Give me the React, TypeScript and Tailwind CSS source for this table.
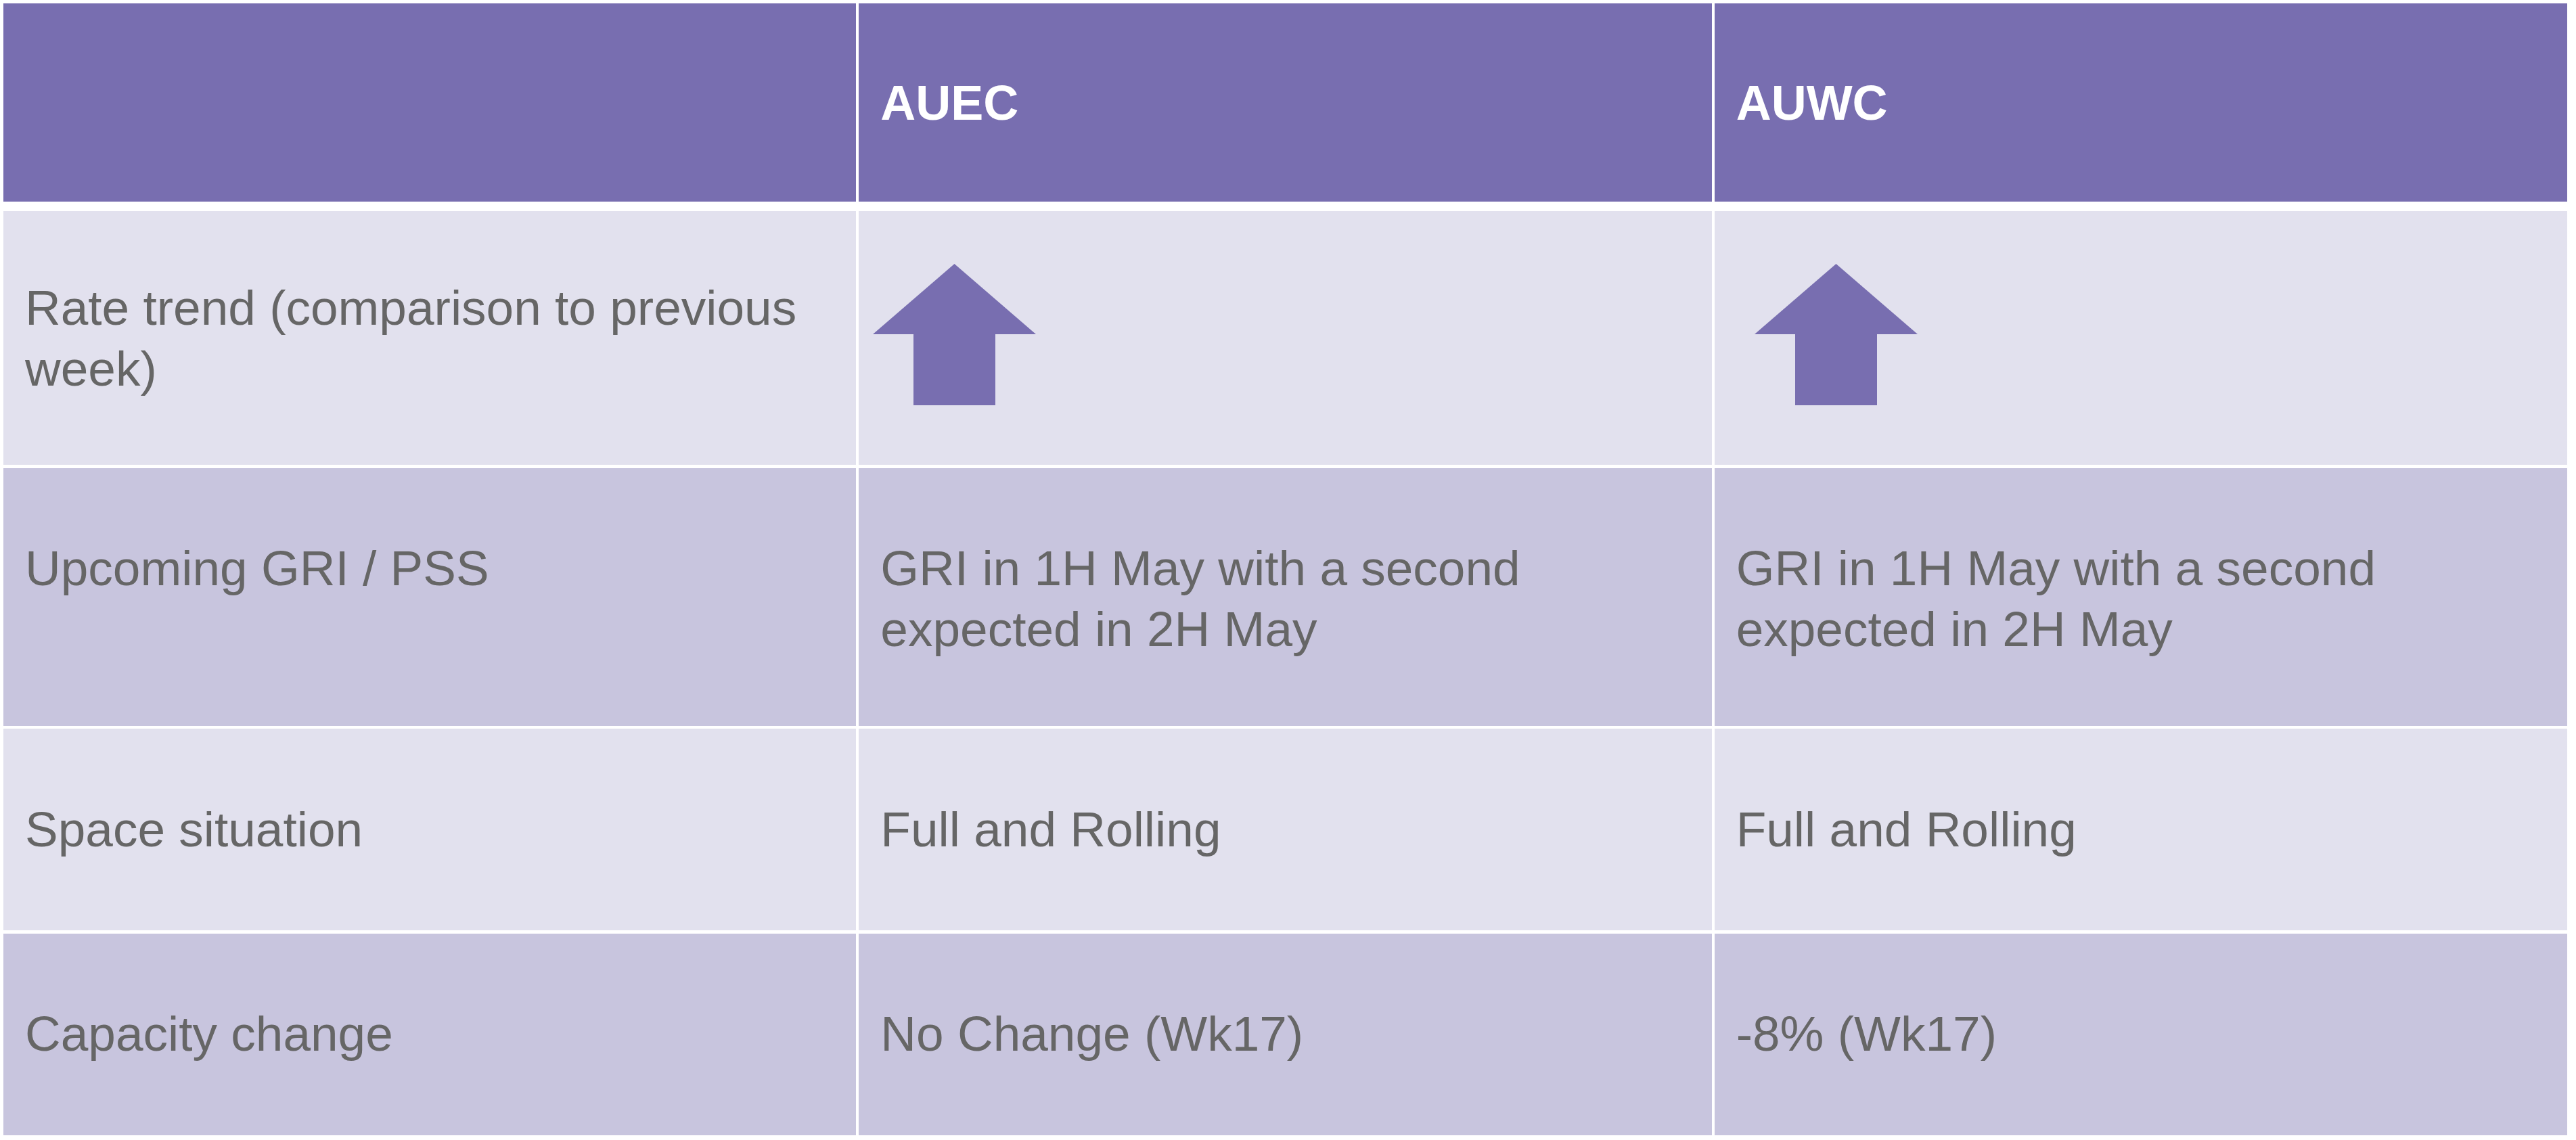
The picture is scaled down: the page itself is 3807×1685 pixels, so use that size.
import React from "react";

const font = { fontFamily: '"Liberation Sans", Arial, sans-serif' };

function Arrow() {
  return (
    <svg width="241" height="209" viewBox="0 0 241 209" className="block">
      <path d="M120.5 0 L241 104 L181 104 L181 209 L60 209 L60 104 L0 104 Z" fill="#786EB0" />
    </svg>
  );
}

function Cell({ children, className = "" }: { children?: React.ReactNode; className?: string }) {
  return (
    <div className={`px-[32px] text-[73px] leading-[90px] text-[#666666] ${className}`}>
      {children}
    </div>
  );
}

export default function App() {
  return (
    <div className="w-[3807px] h-[1685px] bg-white pt-[5px] pl-[5px]" style={font}>
      <div className="w-[3789px] flex flex-col">
        {/* Header */}
        <div className="grid grid-cols-3 gap-x-[4px] h-[293px]">
          <div className="bg-[#786EB0]" />
          <div className="bg-[#786EB0] flex items-center px-[32px] text-white font-bold text-[72px] leading-[90px]">AUEC</div>
          <div className="bg-[#786EB0] flex items-center px-[32px] text-white font-bold text-[72px] leading-[90px]">AUWC</div>
        </div>
        {/* Row 1 */}
        <div className="grid grid-cols-3 gap-x-[4px] h-[375px] mt-[14px]">
          <Cell className="bg-[#E2E1EE] pt-[98px]">Rate trend (comparison to previous week)</Cell>
          <div className="bg-[#E2E1EE] pl-[21px] pt-[78px]">
            <Arrow />
          </div>
          <div className="bg-[#E2E1EE] pl-[59px] pt-[78px]">
            <Arrow />
          </div>
        </div>
        {/* Row 2 */}
        <div className="grid grid-cols-3 gap-x-[4px] h-[381px] mt-[5px]">
          <Cell className="bg-[#C8C5DE] pt-[103px]">Upcoming GRI / PSS</Cell>
          <Cell className="bg-[#C8C5DE] pt-[103px]">GRI in 1H May with a second expected in 2H May</Cell>
          <Cell className="bg-[#C8C5DE] pt-[103px]">GRI in 1H May with a second expected in 2H May</Cell>
        </div>
        {/* Row 3 */}
        <div className="grid grid-cols-3 gap-x-[4px] h-[298px] mt-[4px]">
          <Cell className="bg-[#E2E1EE] pt-[104px]">Space situation</Cell>
          <Cell className="bg-[#E2E1EE] pt-[104px]">Full and Rolling</Cell>
          <Cell className="bg-[#E2E1EE] pt-[104px]">Full and Rolling</Cell>
        </div>
        {/* Row 4 */}
        <div className="grid grid-cols-3 gap-x-[4px] h-[298px] mt-[5px]">
          <Cell className="bg-[#C8C5DE] pt-[103px]">Capacity change</Cell>
          <Cell className="bg-[#C8C5DE] pt-[103px]">No Change (Wk17)</Cell>
          <Cell className="bg-[#C8C5DE] pt-[103px]">-8% (Wk17)</Cell>
        </div>
      </div>
    </div>
  );
}
